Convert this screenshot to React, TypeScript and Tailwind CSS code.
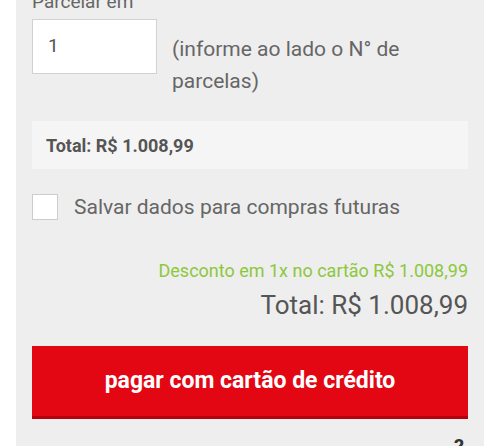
export default function App() {
  const font = { fontFamily: "Roboto, 'Noto Sans', sans-serif" };
  return (
    <div className="w-[500px] h-[446px] overflow-hidden bg-white" style={font}>
      <div className="mx-4 h-[446px] overflow-hidden bg-[#eeeeee] px-4">
        <div className="text-[19px] leading-[22px] text-[#666666] mt-[-9px] h-[22px] pt-0">Parcelar em</div>
        <div className="flex mt-[6px]">
          <div className="w-[125px] h-[55px] bg-white border border-[#d2d2d2] flex items-center pl-[15px] text-[19px] text-[#555555] shrink-0">
            1
          </div>
          <div className="ml-[15px] mt-[14px] text-[21px] leading-[32px] text-[#666666]">
            (informe ao lado o N° de
            <br />
            parcelas)
          </div>
        </div>
        <div className="mt-[24px] h-[48px] bg-[#f5f5f5] flex items-center pl-[14px] text-[18px] font-bold text-[#555555]">
          Total: R$ 1.008,99
        </div>
        <div className="mt-[25px] flex items-center">
          <div className="w-[26px] h-[26px] bg-white border border-[#cccccc] shrink-0" />
          <div className="ml-[16px] text-[21px] leading-[26px] text-[#666666]">Salvar dados para compras futuras</div>
        </div>
        <div className="mt-[40px] text-right text-[18px] leading-[22px] text-[#8cc83c]">
          Desconto em 1x no cartão R$ 1.008,99
        </div>
        <div className="mt-[8px] text-right text-[26px] leading-[30px] text-[#555555]">Total: R$ 1.008,99</div>
        <div className="mt-[26px] h-[73px] bg-[#e30613] border-b-[3px] border-[#b8000d] flex items-center justify-center text-white text-[23px] font-bold">
          pagar com cartão de crédito
        </div>
        <div className="mt-[16px] text-right pr-[4px] text-[20px] font-bold text-[#333333] leading-[24px]">?</div>
      </div>
    </div>
  );
}
